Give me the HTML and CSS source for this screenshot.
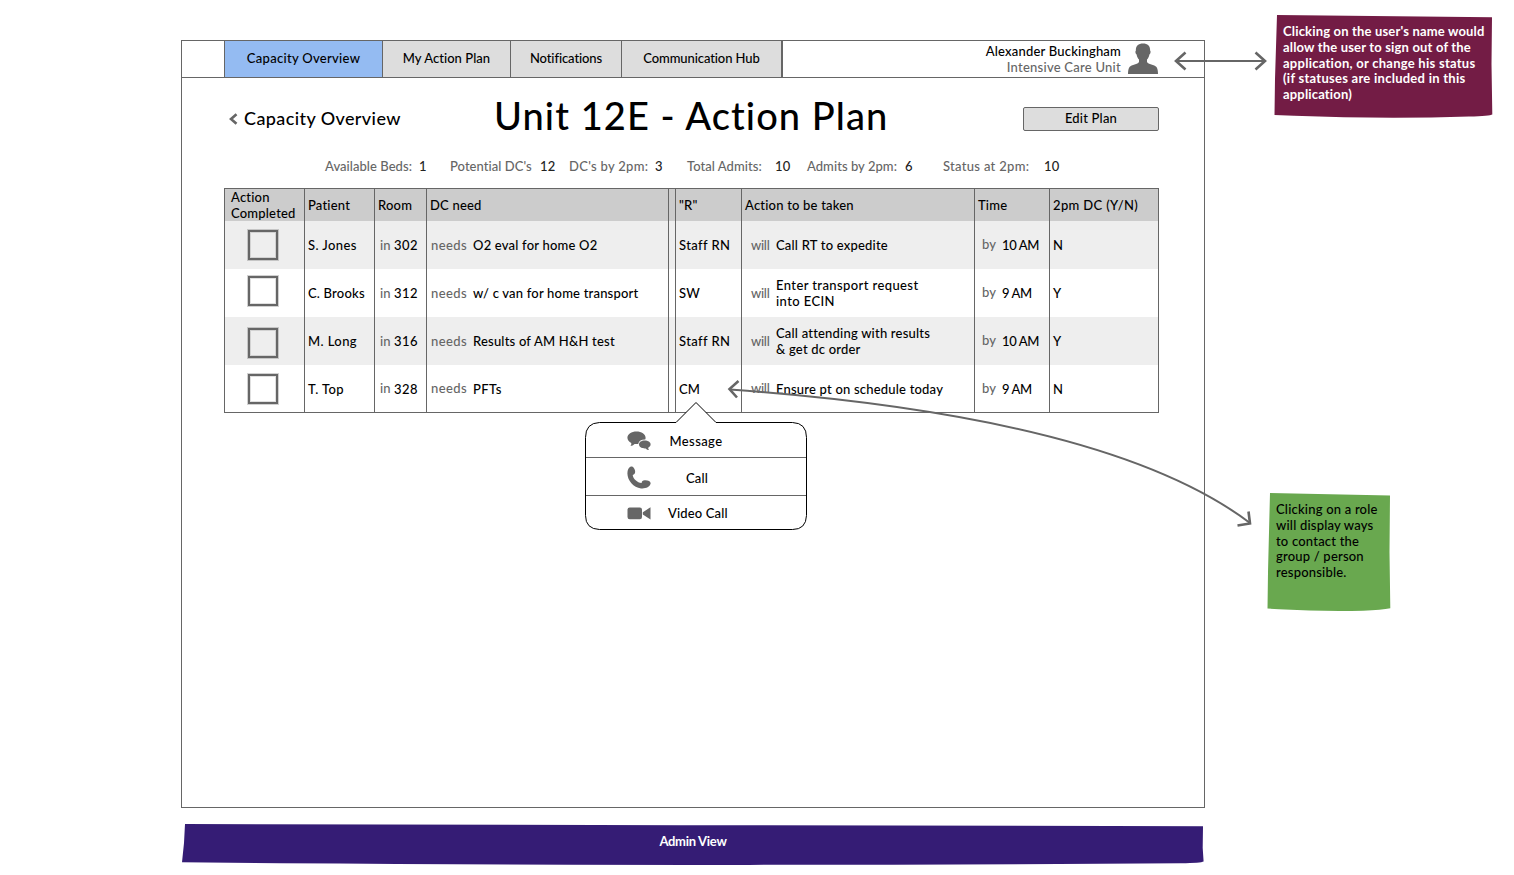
FILE: index.html
```html
<!DOCTYPE html>
<html lang="en">
<head>
<meta charset="utf-8">
<title>Unit 12E - Action Plan</title>
<link rel="stylesheet" href="styles.css">
</head>
<body>
<div class="window">
  <header class="topbar">
    <nav class="tabs">
      <a class="tab tab-capacity active"><span>Capacity Overview</span></a>
      <a class="tab tab-plan"><span>My Action Plan</span></a>
      <a class="tab tab-notes"><span>Notifications</span></a>
      <a class="tab tab-hub"><span>Communication Hub</span></a>
    </nav>
    <div class="user">
      <div class="user-text">
        <div class="user-name">Alexander Buckingham</div>
        <div class="user-unit">Intensive Care Unit</div>
      </div>
      <svg class="avatar" width="30" height="31" viewBox="0 0 30 31"><path d="M15 0.500C10.500 0.500 7.600 3 7.900 7.500C7 8 7.400 11 8.600 11.600C9 14 10 15.600 11 16.600V19C10 21.500 3.500 21.500 1.500 24C0.300 26 0 28.500 0 31H30C30 28.500 29.700 26 28.500 24C26.500 21.500 20 21.500 19 19V16.600C20 15.600 21 14 21.400 11.600C22.600 11 23 8 22.100 7.500C22.400 3 19.500 0.500 15 0.500Z"/></svg>
    </div>
  </header>

  <div class="heading">
    <a class="back">
      <svg width="9" height="12" viewBox="0 0 9 12"><path d="M7.500 1.200L2 6L7.500 10.800"/></svg>
      <span>Capacity Overview</span>
    </a>
    <h1>Unit 12E - Action Plan</h1>
    <button class="edit">Edit Plan</button>
  </div>

  <dl class="stats">
    <dt>Available Beds:</dt><dd>1</dd>
    <dt>Potential DC's</dt><dd>12</dd>
    <dt class="wide">DC's by 2pm:</dt><dd>3</dd>
    <dt>Total Admits:</dt><dd>10</dd>
    <dt>Admits by 2pm:</dt><dd>6</dd>
    <dt class="wide">Status at 2pm:</dt><dd>10</dd>
  </dl>

  <div class="table">
    <div class="row head">
      <div class="done-head">Action<br>Completed</div><div>Patient</div><div>Room</div><div>DC need</div><div></div><div>"R"</div><div>Action to be taken</div><div>Time</div><div class="c-yn">2pm DC (Y/N)</div>
    </div>
    <div class="row shade">
      <div><i class="box"></i></div><div class="wide">S. Jones</div><div class="wide"><em class="in">in</em>302</div><div><em class="needs">needs</em><span>O2 eval for home O2</span></div><div></div><div class="wide">Staff RN</div><div><em class="will">will</em><span>Call RT to expedite</span></div><div class="time"><em class="by">by</em>10 AM</div><div>N</div>
    </div>
    <div class="row">
      <div><i class="box high"></i></div><div>C. Brooks</div><div class="wide"><em class="in">in</em>312</div><div><em class="needs">needs</em><span>w/ c van for home transport</span></div><div></div><div>SW</div><div><em class="will">will</em><span class="wide">Enter transport request<br>into ECIN</span></div><div class="time"><em class="by">by</em>9 AM</div><div>Y</div>
    </div>
    <div class="row shade">
      <div><i class="box low"></i></div><div class="wide">M. Long</div><div class="wide"><em class="in">in</em>316</div><div><em class="needs">needs</em><span>Results of AM H&amp;H test</span></div><div></div><div class="wide">Staff RN</div><div><em class="will">will</em><span>Call attending with results<br>&amp; get dc order</span></div><div class="time"><em class="by">by</em>10 AM</div><div>Y</div>
    </div>
    <div class="row last">
      <div><i class="box"></i></div><div class="wide">T. Top</div><div class="wide"><em class="in">in</em>328</div><div><em class="needs">needs</em><span class="wide">PFTs</span></div><div></div><div>CM</div><div><em class="will">will</em><span>Ensure pt on schedule today</span></div><div class="time"><em class="by">by</em>9 AM</div><div>N</div>
    </div>
  </div>
</div>

<div class="popover">
  <svg class="popover-shape" width="224" height="130" viewBox="0 0 224 130">
    <path d="M15.500 21.500H92L112 1.500L132 21.500H208.500Q222.500 22 222.500 36.500V114.500Q222 128.500 208.500 128.500H15.500Q1.500 128 1.500 114.500V36.500Q1.500 22 15.500 21.500Z"/>
  </svg>
  <ul class="contact">
    <li class="c-msg">
      <svg width="24" height="20" viewBox="0 0 24 20"><path d="M9.500 0.500C14.500 0.500 18.600 3.200 18.600 6.800C18.600 7.600 18.500 8 18.200 8.600C14.500 8.500 11.800 10 11.200 12.900C10.200 13.100 8.600 13.100 7.600 12.900C6.400 14.200 4.900 14.800 3.500 14.800C4.200 13.800 4.500 12.800 4.300 11.900C2 10.800 0.400 9 0.400 6.800C0.400 3.200 4.500 0.500 9.500 0.500Z"/><path d="M17.700 9.600C21.100 9.600 23.600 11.200 23.600 13.500C23.600 14.900 22.600 16 21.200 16.700C21.100 17.500 21.400 18.300 22 19C20.700 19 19.700 18.400 18.800 17.400C14.900 17.700 12 16 12 13.500C12 11.200 14.300 9.600 17.700 9.600Z"/></svg>
      <span>Message</span>
    </li>
    <li class="c-call">
      <svg width="24" height="23" viewBox="0 0 24 23"><path d="M3.800 0.600C5.600-0.200 7.400 1.500 8 4.600C8.500 7.200 7.800 8.200 5.700 9C6.200 13.200 10.200 16.400 14.600 17.100C14.800 14.900 16 14.100 18.300 14.300C21.500 14.500 24 15.600 23.600 17.600C22.600 21.200 18.600 22.800 14 22.400C6.500 21.500 0.500 14.500 0.400 7.500C0.400 4 1.600 1.500 3.800 0.600Z"/></svg>
      <span>Call</span>
    </li>
    <li class="c-video">
      <svg width="24" height="13" viewBox="0 0 24 13"><rect x="0.500" y="0.500" width="14.500" height="11.800" rx="2.200"/><path d="M23.500 0.300V12.500L15.800 7.600V5.200Z"/></svg>
      <span>Video Call</span>
    </li>
  </ul>
</div>

<svg class="arrows" width="1514" height="875" viewBox="0 0 1514 875">
  <path d="M1176 61H1265"/>
  <path class="tip" d="M1185.500 52.500L1176 61L1185.500 69.500M1255.500 52.500L1265 61L1255.500 69.500"/>
  <path d="M730 389.500Q1110 417 1250 523"/>
  <path class="tip" d="M738.500 381L729.500 389L737 397.500M1248.500 511.500L1250 523.500L1237.500 525.500"/>
</svg>

<aside class="note note-user">
  <svg width="220" height="106" viewBox="0 0 220 106"><path d="M3 1L218 3.200L217.500 50L218.300 100.500Q216 102 195 102.600Q110 105.500 20 101.800L0.500 101L1 65Z"/></svg>
  <p>Clicking on the user's name would<br>allow the user to sign out of the<br><span class="loose">application, or change his status</span><br><span class="loose">(if statuses are included in this</span><br>application)</p>
</aside>

<aside class="note note-role">
  <svg width="124" height="120" viewBox="0 0 124 120"><path d="M3 1L123 3.500L122.500 60L123.300 116.300Q115 118 96 118.700Q55 119.700 12 117.200L0.500 116.500L1 80Z"/></svg>
  <p>Clicking on a role<br>will display ways<br>to contact the<br>group / person<br>responsible.</p>
</aside>

<footer class="note note-admin">
  <svg width="1024" height="43" viewBox="0 0 1024 43"><path d="M4 1L500 2.200L1022 3.200L1021.700 25L1022.600 38.500Q1020 40 1000 40.200Q600 43.500 100 40.300L1 39.200L3 20Z"/></svg>
  <p>Admin View</p>
</footer>
</body>
</html>
```

FILE: styles.css
```css
* { box-sizing: border-box; }
body {
  margin: 0;
  width: 1514px;
  height: 875px;
  position: relative;
  overflow: hidden;
  background: #fff;
  color: #000;
  font: 500 13px/16px Lato, "Noto Sans", sans-serif;
  letter-spacing: 0.2px;
}
p, h1, dl, dd, ul { margin: 0; padding: 0; }
em, i { font-style: normal; }

.window {
  width: 1024px;
  height: 768px;
  margin: 40px 0 0 181px;
  border: 1px solid #666;
}

.topbar {
  display: flex;
  justify-content: space-between;
  height: 37px;
  padding-left: 42px;
  border-bottom: 1px solid #666;
}
.tabs { display: flex; border-left: 1px solid #666; border-right: 1px solid #666; }
.tab {
  display: flex;
  justify-content: center;
  align-items: center;
  padding-bottom: 2px;
  background: #ddd;
  border-right: 1px solid #666;
}
.tab.active { background: #94bbf2; }
.tab-capacity { width: 158px; letter-spacing: 0.3px; }
.tab-plan { width: 128px; letter-spacing: 0.05px; }
.tab-notes { width: 111px; letter-spacing: -0.1px; }
.tab-hub { width: 160px; letter-spacing: -0.1px; }

.user { display: flex; padding: 2px 46px 0 0; gap: 7px; }
.user-text { text-align: right; }
.user-unit { color: #666; letter-spacing: 0.25px; }
.avatar { fill: #666; }

.heading {
  display: grid;
  grid-template-columns: 265px 394px 135px 136px;
  padding: 18px 0 0 47px;
  height: 77px;
}
.back { display: flex; align-items: flex-start; gap: 6px; padding-top: 12px; font-size: 18px; line-height: 20px; letter-spacing: 0.4px; }
.back svg { margin-top: 5px; fill: none; stroke: #666; stroke-width: 2.6; }
h1 { font: 500 38px/38px Lato, sans-serif; letter-spacing: 1.08px; white-space: nowrap; }
.edit {
  grid-column: 4;
  height: 24px;
  margin-top: 11px;
  padding: 0 0 2px;
  border: 1px solid #666;
  border-radius: 2px;
  background: #ddd;
  color: #000;
  font: inherit;
  letter-spacing: inherit;
}

.stats {
  display: grid;
  grid-template-columns: 94px 31px 90px 29px 86px 32px 88px 32px 98px 38px 101px 30px;
  padding: 3px 0 0 143px;
  height: 33px;
  white-space: nowrap;
}
dt { color: #666; letter-spacing: 0.05px; }
dt.wide { letter-spacing: 0.3px; }
dd { color: #222; }

.table {
  width: 935px;
  margin-left: 42px;
  border: 1px solid #666;
  border-left: 0;
}
.row {
  display: grid;
  grid-template-columns: 80px 70px 52px 242px 7px 66px 233px 75px 109px;
  height: 48px;
  white-space: nowrap;
}
.row.last { height: 47px; }
.row > div { display: flex; align-items: center; border-left: 1px solid #666; padding-left: 3px; }
.row.head { height: 32px; background: #ccc; }
.row .done-head { padding-left: 6px; }
.row .c-yn { letter-spacing: 0.35px; }
.row .wide { letter-spacing: 0.4px; }
.row .time { letter-spacing: -0.4px; }
.shade { background: #eee; }
.box {
  width: 30px;
  height: 30px;
  margin-left: 20px;
  border: 2px solid #666;
  box-shadow: 0 0 0 1px rgba(102,102,102,.3), inset 0 0 0 1px rgba(102,102,102,.2);
}
.box.high { margin-bottom: 4px; }
.box.low { margin-top: 4px; }
em { color: #666; margin-top: -1px; letter-spacing: 0.2px; }
.in { width: 16px; padding-left: 2px; }
.needs { width: 43px; padding-left: 1px; letter-spacing: 0.4px; }
.will { width: 31px; padding-left: 6px; letter-spacing: -0.3px; }
.by { width: 24px; padding-left: 4px; margin-top: -2px; }

.popover { position: absolute; left: 584px; top: 401px; width: 224px; height: 130px; }
.popover-shape { position: absolute; left: 0; top: 0; fill: #fff; stroke: #000; stroke-width: 1; }
.contact { position: relative; list-style: none; padding: 22px 2px 0 2px; }
.contact li { display: grid; grid-template-columns: 24px 58px; column-gap: 17px; align-items: center; padding-left: 41px; text-align: center; white-space: nowrap; }
.contact svg { fill: #666; }
.contact .c-msg { height: 35px; padding-top: 2px; border-bottom: 1px solid #666; column-gap: 16px; letter-spacing: 0.4px; }
.contact .c-call { height: 38px; padding-top: 2px; border-bottom: 1px solid #666; }
.contact .c-video { height: 34px; letter-spacing: 0.15px; }

.arrows { position: absolute; left: 0; top: 0; fill: none; stroke: #666; stroke-width: 2; pointer-events: none; }
.tip { stroke-width: 2.6; }

.note { position: absolute; white-space: nowrap; }
.note svg { position: absolute; left: 0; top: 0; }
.note p { position: relative; }
.note-user { left: 1274px; top: 14px; color: #fff; font-weight: 700; line-height: 15.8px; letter-spacing: 0.17px; }
.note-user .loose { letter-spacing: 0.26px; }
.note-user svg { fill: #731c45; }
.note-user p { padding: 10px 0 0 9px; }
.note-role { left: 1267px; top: 492px; line-height: 15.8px; }
.note-role svg { fill: #69a84f; }
.note-role p { padding: 10px 0 0 9px; }
.note-admin { left: 181px; top: 823px; width: 1024px; color: #fff; font-weight: 700; text-align: center; letter-spacing: -0.3px; }
.note-admin svg { fill: #351c75; }
.note-admin p { padding-top: 10px; }
```
